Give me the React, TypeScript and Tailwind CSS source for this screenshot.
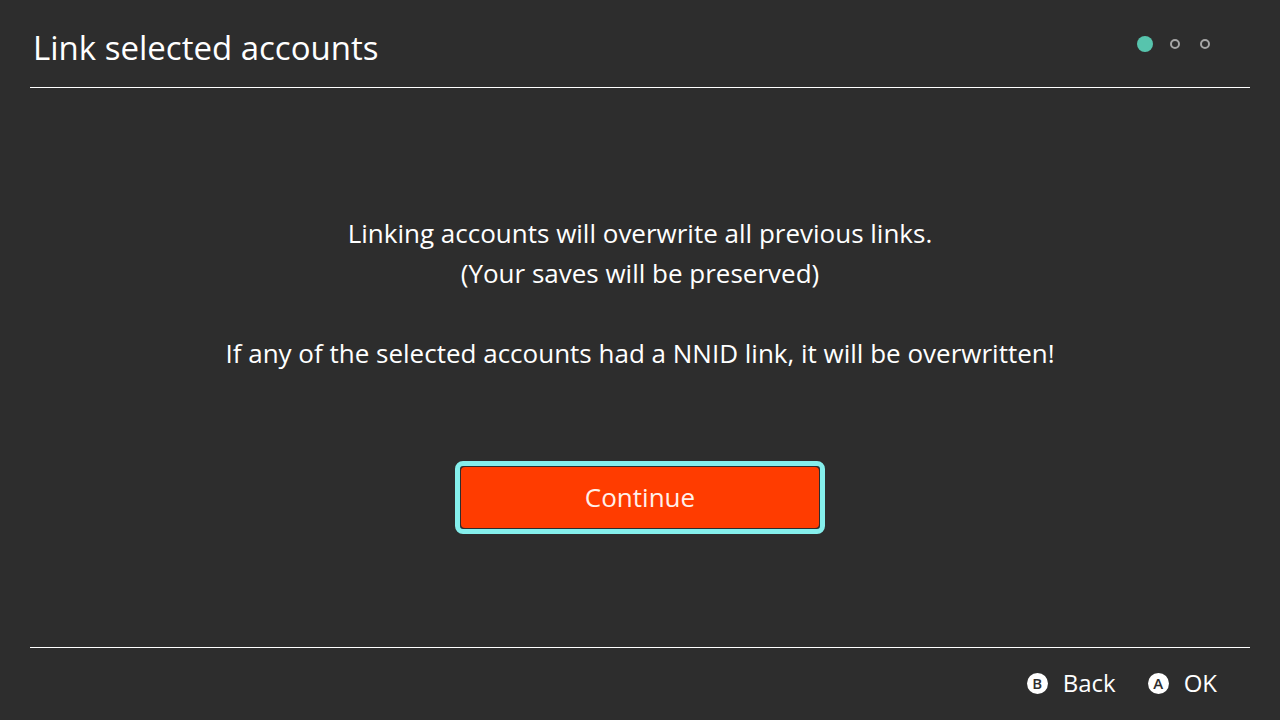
const steps = ["Link", "Confirm", "Done"];
const currentStep = 0;

function StepDots() {
  return (
    <ol className="flex items-center">
      {steps.map((step, i) => (
        <li key={step} aria-label={step} className="flex size-[30px] items-center justify-center">
          {i === currentStep ? (
            <span className="size-4 rounded-full bg-[#57c4ad]" />
          ) : (
            <span className="size-[10px] rounded-full border-2 border-[#a5a5a5]" />
          )}
        </li>
      ))}
    </ol>
  );
}

interface HintProps {
  button: string;
  label: string;
}

function Hint({ button, label }: HintProps) {
  return (
    <button type="button" className="flex items-center gap-[15px] text-[24px] leading-8">
      <span className="flex size-[21px] items-center justify-center rounded-full bg-white text-[15px] leading-none font-semibold text-[#2d2d2d]">
        {button}
      </span>
      {label}
    </button>
  );
}

export default function App() {
  return (
    <div className="flex min-h-screen flex-col bg-[#2d2d2d] px-[30px] font-['Open_Sans',sans-serif] text-white">
      <header className="flex h-[88px] items-center justify-between border-b border-white pr-[30px] pl-[3px]">
        <h1 className="pt-2 text-[33px] leading-10">Link selected accounts</h1>
        <StepDots />
      </header>

      <main className="flex grow flex-col items-center justify-center gap-[88px] pt-3 text-center">
        <div className="space-y-10 text-[26px] leading-10">
          <p>
            Linking accounts will overwrite all previous links.
            <br />
            (Your saves will be preserved)
          </p>
          <p>If any of the selected accounts had a NNID link, it will be overwritten!</p>
        </div>
        <button
          type="button"
          className="h-[73px] w-[370px] rounded-lg border-[5px] border-[#85efec] bg-[#2d2d2d] p-px text-[26px] text-[#fff0ea]"
        >
          <span className="flex h-full items-center justify-center rounded-[4px] bg-[#ff3c00]">
            Continue
          </span>
        </button>
      </main>

      <footer className="flex h-[73px] items-center justify-end gap-8 border-t border-white pr-[33px] pb-[2px]">
        <Hint button="B" label="Back" />
        <Hint button="A" label="OK" />
      </footer>
    </div>
  );
}
